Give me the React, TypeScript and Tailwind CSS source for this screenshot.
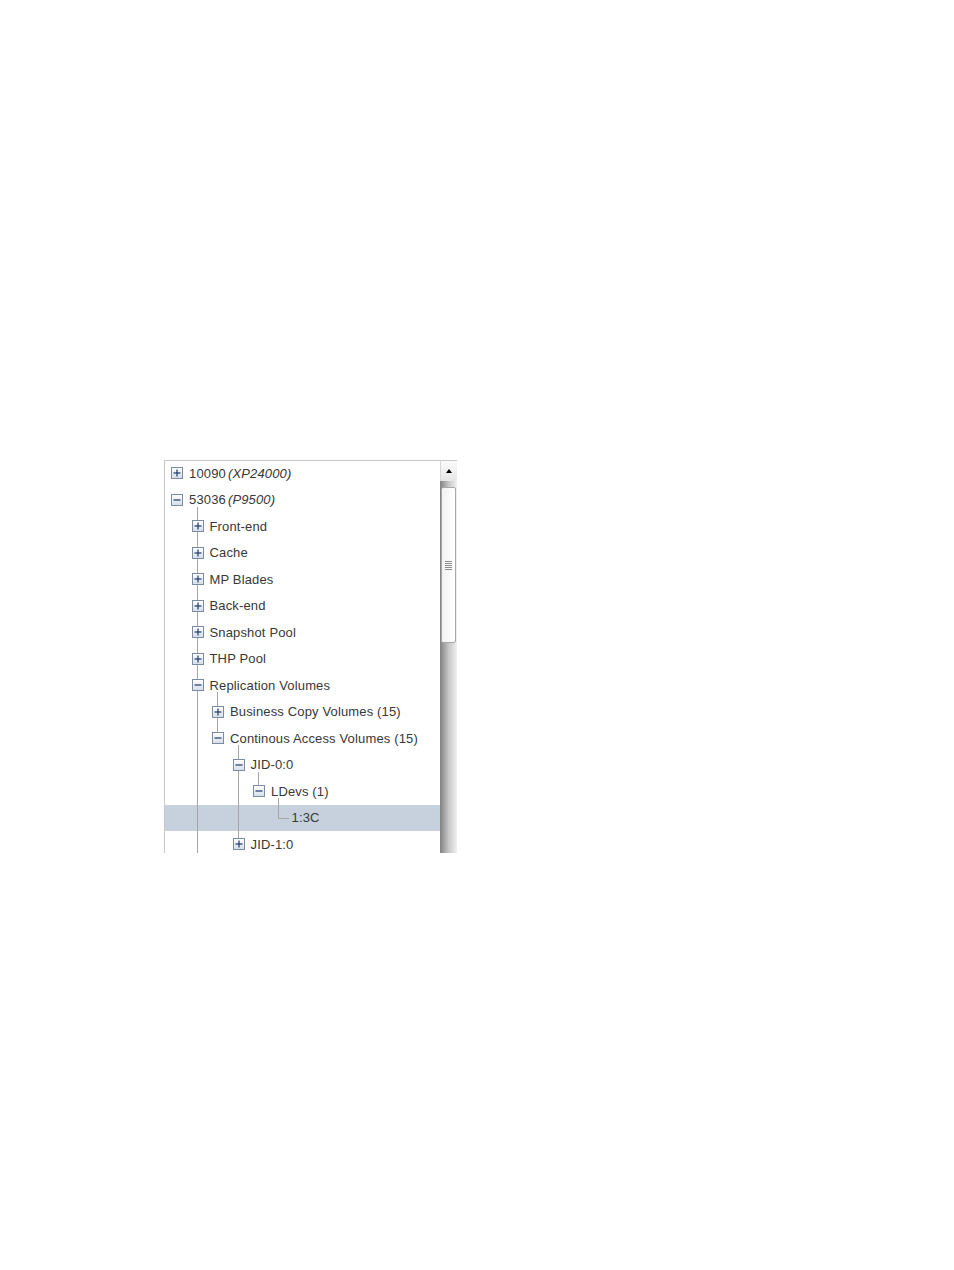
import type React from "react"

type Node = {
  level: number
  icon?: "plus" | "minus"
  label: string
  em?: string
  selected?: boolean
}

const rows: Node[] = [
  { level: 0, icon: "plus", label: "10090", em: "(XP24000)" },
  { level: 0, icon: "minus", label: "53036", em: "(P9500)" },
  { level: 1, icon: "plus", label: "Front-end" },
  { level: 1, icon: "plus", label: "Cache" },
  { level: 1, icon: "plus", label: "MP Blades" },
  { level: 1, icon: "plus", label: "Back-end" },
  { level: 1, icon: "plus", label: "Snapshot Pool" },
  { level: 1, icon: "plus", label: "THP Pool" },
  { level: 1, icon: "minus", label: "Replication Volumes" },
  { level: 2, icon: "plus", label: "Business Copy Volumes (15)" },
  { level: 2, icon: "minus", label: "Continous Access Volumes (15)" },
  { level: 3, icon: "minus", label: "JID-0:0" },
  { level: 4, icon: "minus", label: "LDevs (1)" },
  { level: 5, label: "1:3C", selected: true },
  { level: 3, icon: "plus", label: "JID-1:0" },
]

// indentation per level, box left edge inside the tree area
const indent = ["pl-[6px]", "pl-[26.5px]", "pl-[47px]", "pl-[67.5px]", "pl-[88px]", "pl-[108.5px]"]

const ToggleBox = ({ kind }: { kind: "plus" | "minus" }) => (
  <svg width="12" height="12" viewBox="0 0 12 12" className="relative z-20 shrink-0">
    <defs>
      <linearGradient id={`g-${kind}`} x1="0" y1="0" x2="0" y2="1">
        <stop offset="0" stopColor="#ffffff" />
        <stop offset="1" stopColor="#d5dde7" />
      </linearGradient>
    </defs>
    <rect x="0.5" y="0.5" width="11" height="11" fill={`url(#g-${kind})`} stroke="#7b8ca2" />
    <path d="M2.5 6h7" stroke="#1d3a6b" strokeWidth="1.2" />
    {kind === "plus" && <path d="M6 2.5v7" stroke="#1d3a6b" strokeWidth="1.2" />}
  </svg>
)

const TreeRow = ({ node }: { node: Node }) => (
  <div
    className={`flex h-[26.5px] items-center ${indent[node.level]} ${
      node.selected ? "bg-[#c6d1dd]" : ""
    }`}
  >
    {node.icon ? <ToggleBox kind={node.icon} /> : <span className="w-[12px] shrink-0" />}
    <span className="relative z-20 ml-[6px] whitespace-nowrap text-[13px] leading-none tracking-[0.15px] text-[#383838]">
      {node.label}
      {node.em && <em className="ml-[2px] italic">{node.em}</em>}
    </span>
  </div>
)

// connector lines, drawn in tree-area coordinates
const TreeLines = () => (
  <svg className="pointer-events-none absolute inset-0 z-10" width="275" height="400">
    <g stroke="#a6a6a6" strokeWidth="1" fill="none" shapeRendering="crispEdges">
      <path d="M32 47V400" />
      <path d="M52.5 232V273" />
      <path d="M73 285V379" />
      <path d="M93.5 312V326" />
      <path d="M113.5 338V358H124" />
    </g>
  </svg>
)

const Scrollbar = () => (
  <div className="flex w-[17px] shrink-0 flex-col bg-gradient-to-r from-[#828282] via-[#c6c6c6] to-[#f1f1f1]">
    <div className="flex h-[20px] items-center justify-center border-l border-[#d8d8d8] bg-gradient-to-b from-[#fbfbfb] to-[#e6e6e6]">
      <span className="block h-0 w-0 border-x-[3.5px] border-b-[4px] border-x-transparent border-b-black" />
    </div>
    <div className="mx-[1px] mt-[6px] flex h-[156px] flex-col items-center justify-center gap-[1px] rounded-[2px] border border-[#a8a8a8] bg-gradient-to-r from-[#f2f2f2] to-white">
      {[0, 1, 2, 3, 4].map((i) => (
        <span key={i} className="block h-px w-[7px] bg-[#8c8c8c]" />
      ))}
    </div>
  </div>
)

export default function App() {
  return (
    <div className="h-[1270px] w-[954px] bg-white pl-[164px] pt-[460px] font-['Liberation_Sans',Arial,sans-serif]">
      <div className="flex h-[393px] w-[293px] overflow-hidden border-l border-t border-[#c9c9c9]">
        <div className="relative -mt-px flex-1">
          <TreeLines />
          {rows.map((node, i) => (
            <TreeRow key={i} node={node} />
          ))}
        </div>
        <Scrollbar />
      </div>
    </div>
  )
}
